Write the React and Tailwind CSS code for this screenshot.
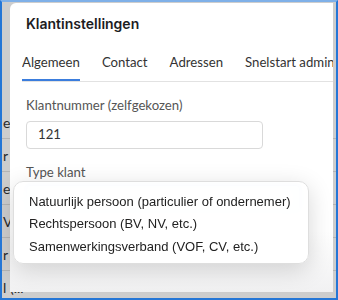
import React from "react";

const rows = ["e", "r F", "er-", "V.", "r J", "l (..."];

const options = [
  "Natuurlijk persoon (particulier of ondernemer)",
  "Rechtspersoon (BV, NV, etc.)",
  "Samenwerkingsverband (VOF, CV, etc.)",
];

export default function App() {
  return (
    <div className="w-[338px] h-[300px] border-2 border-[#2476d6] border-t-[#7fb0e8] box-border overflow-hidden">
      <div className="relative w-full h-full bg-[#cdcdcd] overflow-hidden" style={{ fontFamily: "Lato, sans-serif" }}>
        {/* table behind the overlay */}
        <div className="pt-[104px] flex flex-col">
          {rows.map((r) => (
            <div key={r} className="h-[33px] border-b border-[#b4b4b4] flex items-center pl-[1px]">
              <span className="whitespace-nowrap text-[14px] text-[#2a2a2a]">{r}</span>
            </div>
          ))}
        </div>

        {/* modal */}
        <div className="absolute left-[8px] top-[1px] w-[323px] h-[289px] bg-white rounded-tl-[6px] flex flex-col">
          <div
            className="pt-[11px] px-4 text-[14px] leading-[20px] font-semibold text-[#1d1d1f]"
            style={{ fontFamily: "Inter, sans-serif" }}
          >
            Klantinstellingen
          </div>
          <div className="mt-[18px] ml-[12px] flex gap-[22px] border-b border-[#e2e2e2] whitespace-nowrap text-[13.2px] leading-[20px] text-[#333] overflow-hidden">
            <div className="pb-[7px] border-b-2 border-[#3b7ddd]">Algemeen</div>
            <div className="pb-[7px]">Contact</div>
            <div className="pb-[7px]">Adressen</div>
            <div className="pb-[7px]">Snelstart admin</div>
          </div>
          <div className="px-4 pt-[13px]">
            <div className="text-[13.2px] leading-[20px] text-[#555]">Klantnummer (zelfgekozen)</div>
            <div className="mt-[6px] w-[237px] h-[28px] border border-[#d9d9d9] rounded-[4px] pl-[11px] flex items-center text-[13.2px] text-[#333]">
              121
            </div>
            <div className="mt-[13px] text-[13.2px] leading-[20px] text-[#555]">Type klant</div>
            <div className="mt-[3px] w-[274px] h-[26px] border border-[#9ec3f3] rounded-[4px] ring-2 ring-[#d8e7fb]" />
          </div>
          <div className="flex-1 mt-[20px] bg-gradient-to-b from-white to-[#f1f1f2]" />
        </div>

        {/* native select menu */}
        <div
          className="absolute left-[11px] top-[179px] w-[296px] pt-[8px] pb-[5px] rounded-[10px] bg-white/90 backdrop-blur-sm border border-[#dedede] shadow-[0_6px_24px_rgba(0,0,0,0.16)] text-[13px] text-[#222]"
          style={{ fontFamily: "'Liberation Sans', Arial, sans-serif" }}
        >
          {options.map((o) => (
            <div key={o} className="h-[22.5px] pl-[15px] flex items-center whitespace-nowrap">
              {o}
            </div>
          ))}
        </div>
      </div>
    </div>
  );
}
